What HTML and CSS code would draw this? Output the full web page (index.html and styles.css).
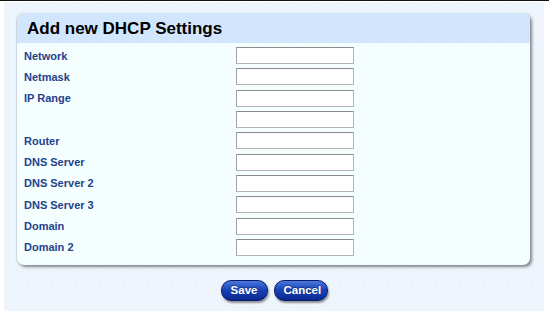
FILE: index.html
```html
<!DOCTYPE html>
<html lang="en">
<head>
    <meta charset="UTF-8">
    <title>Add new DHCP Settings</title>
    <link rel="stylesheet" href="styles.css">
</head>
<body>
    <div class="page">
        <div class="panel">
            <h1 class="panel-title">Add new DHCP Settings</h1>
            <form class="settings-form">
                <label class="field-label" for="network">Network</label>
                <input class="field-input" type="text" id="network">

                <label class="field-label" for="netmask">Netmask</label>
                <input class="field-input" type="text" id="netmask">

                <label class="field-label" for="range-start">IP Range</label>
                <input class="field-input" type="text" id="range-start">

                <span class="field-label"></span>
                <input class="field-input" type="text" id="range-end">

                <label class="field-label" for="router">Router</label>
                <input class="field-input" type="text" id="router">

                <label class="field-label" for="dns1">DNS Server</label>
                <input class="field-input" type="text" id="dns1">

                <label class="field-label" for="dns2">DNS Server 2</label>
                <input class="field-input" type="text" id="dns2">

                <label class="field-label" for="dns3">DNS Server 3</label>
                <input class="field-input" type="text" id="dns3">

                <label class="field-label" for="domain1">Domain</label>
                <input class="field-input" type="text" id="domain1">

                <label class="field-label" for="domain2">Domain 2</label>
                <input class="field-input" type="text" id="domain2">
            </form>
        </div>
        <div class="button-row">
            <button class="pill-btn">Save</button>
            <button class="pill-btn">Cancel</button>
        </div>
    </div>
</body>
</html>
```
FILE: styles.css
```css
body {
    margin: 0;
    background: #ffffff;
    border-top: 1px solid #111111;
    font-family: "Liberation Sans", Arial, sans-serif;
}

.page {
    margin: 1px 5px 0 4px;
    height: 309px;
    box-sizing: border-box;
    padding: 11px 14px 0 13px;
    background-color: #eef4fc;
    background-image: radial-gradient(#f6f9fe 0.6px, transparent 0.8px);
    background-size: 6px 6px;
}

.panel {
    background: #f5feff;
    border-radius: 7px;
    box-shadow: 2px 2px 3px rgba(0, 0, 0, 0.45), -1px 0 1px rgba(0, 0, 0, 0.12);
    overflow: hidden;
    padding-bottom: 9px;
}

.panel-title {
    margin: 0;
    height: 30px;
    line-height: 31px;
    padding-left: 10px;
    font-size: 17px;
    font-weight: bold;
    color: #000000;
    background-color: #d1e6fc;
    background-image: radial-gradient(#dcecfd 0.6px, transparent 0.8px);
    background-size: 5px 5px;
}

.settings-form {
    display: grid;
    grid-template-columns: 212px 118px;
    grid-auto-rows: 17px;
    row-gap: 4.33px;
    padding: 4px 0 0 7px;
    align-items: center;
}

.field-label {
    font-size: 11px;
    font-weight: bold;
    color: #24418a;
}

.field-input {
    box-sizing: border-box;
    width: 118px;
    height: 17px;
    margin: 0;
    padding: 1px 3px;
    background: #ffffff;
    border: 1px solid #b4b4b4;
    border-top-color: #8c8c8c;
    border-left-color: #a0a0a0;
    font-size: 11px;
}

.button-row {
    display: flex;
    justify-content: center;
    gap: 6px;
    margin-top: 15px;
    padding-left: 1px;
}

.pill-btn {
    height: 21px;
    padding: 0 9px 1px;
    border: 1px solid #081a6a;
    border-radius: 10px;
    background: linear-gradient(#4a78dc 0%, #1a43b8 45%, #0a2890 100%);
    color: #ffffff;
    font-family: "Liberation Sans", Arial, sans-serif;
    font-size: 11.5px;
    font-weight: bold;
    text-shadow: 0 -1px 0 rgba(0, 0, 0, 0.35);
    box-shadow: 1px 2px 2px rgba(0, 0, 0, 0.4);
    cursor: pointer;
}

.pill-btn:first-child {
    width: 47px;
}

.pill-btn:last-child {
    width: 54px;
}
```
